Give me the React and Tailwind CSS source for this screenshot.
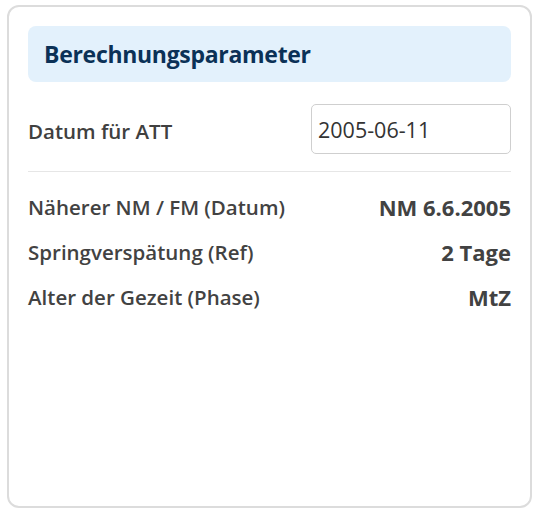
import { useState } from "react";

const rows = [
  { label: "Näherer NM / FM (Datum)", value: "NM 6.6.2005" },
  { label: "Springverspätung (Ref)", value: "2 Tage" },
  { label: "Alter der Gezeit (Phase)", value: "MtZ" },
];

function App() {
  const [datum, setDatum] = useState("2005-06-11");

  return (
    <div className="bg-white w-[540px] h-[517px] pt-[5px] pl-[7px]" style={{ fontFamily: '"Open Sans", "Noto Sans", sans-serif' }}>
      <div className="w-[525px] h-[503px] border-2 border-[#dcdcdc] rounded-[12px] px-[19px] pt-[19px]">
        <div className="h-[56px] bg-[#e3f1fc] rounded-[8px] flex items-center pl-[16px]">
          <h2 className="text-[23px] font-bold text-[#0b3157] tracking-[-0.3px]">Berechnungsparameter</h2>
        </div>

        <div className="flex items-center justify-between mt-[22px]">
          <label htmlFor="datumInput" className="text-[20.5px] font-semibold text-[#404040] mt-[4px]">
            Datum für ATT
          </label>
          <input
            id="datumInput"
            value={datum}
            onChange={(event) => setDatum(event.target.value)}
            className="w-[200px] h-[50px] border border-[#cfcfcf] rounded-[5px] px-[6px] text-[21.5px] text-[#333] focus:outline-none"
          />
        </div>

        <div className="border-t border-[#e6e6e6] mt-[17px] mb-[20px]" />

        <div className="flex flex-col gap-[15px]">
          {rows.map((row) => (
            <div key={row.label} className="flex items-center justify-between h-[30px] text-[#424242]">
              <span className="text-[20.5px] font-semibold">{row.label}</span>
              <span className="text-[22px] font-bold">{row.value}</span>
            </div>
          ))}
        </div>
      </div>
    </div>
  );
}

export default App;
